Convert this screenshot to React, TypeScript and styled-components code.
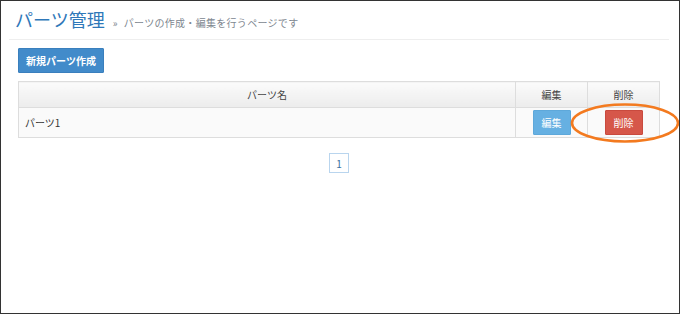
import styled, { createGlobalStyle } from 'styled-components';

const GlobalStyle = createGlobalStyle`
  html, body {
    margin: 0;
    padding: 0;
    background: #fff;
  }
  body {
    font-family: 'Noto Sans CJK JP', 'Noto Sans', sans-serif;
  }
`;

const parts = [{ id: 1, name: 'パーツ1' }];

export default function App() {
  return (
    <>
      <GlobalStyle />
      <Frame>
        <PageHeader>
          <Title>パーツ管理</Title>
          <SubTitle>
            <Chevron>»</Chevron>
            パーツの作成・編集を行うページです
          </SubTitle>
        </PageHeader>
        <Rule />
        <Content>
          <Toolbar>
            <Button variant="primary" wide>新規パーツ作成</Button>
          </Toolbar>
          <Table>
            <thead>
              <tr>
                <Th>パーツ名</Th>
                <Th width={71}>編集</Th>
                <Th width={71}>削除</Th>
              </tr>
            </thead>
            <tbody>
              {parts.map((p) => (
                <tr key={p.id}>
                  <Td>{p.name}</Td>
                  <Td center>
                    <Button variant="info">編集</Button>
                  </Td>
                  <Td center>
                    <Button variant="danger">削除</Button>
                  </Td>
                </tr>
              ))}
            </tbody>
          </Table>
          <Pagination>
            <PageItem>1</PageItem>
          </Pagination>
        </Content>
        <Highlight viewBox="0 0 112 44">
          <ellipse cx="56" cy="21" rx="53" ry="18.5" fill="none" stroke="#f37a1f" strokeWidth="2.6" />
        </Highlight>
      </Frame>
    </>
  );
}

const Frame = styled.div`
  position: relative;
  box-sizing: border-box;
  width: 680px;
  height: 314px;
  border: 1px solid #333;
  overflow: hidden;
`;

const PageHeader = styled.div`
  display: flex;
  align-items: baseline;
  gap: 8px;
  padding: 5px 0 0 14px;
  height: 34px;
  box-sizing: border-box;
`;

const Title = styled.h1`
  margin: 0;
  font-size: 18px;
  font-weight: 400;
  line-height: 26px;
  color: #2f78b9;
`;

const SubTitle = styled.span`
  font-size: 10px;
  letter-spacing: 0.3px;
  color: #808790;
`;

const Chevron = styled.span`
  margin-right: 6px;
`;

const Rule = styled.hr`
  margin: 4px 10px 0 8px;
  border: 0;
  border-top: 1px solid #eeeeee;
`;

const Content = styled.div`
  padding: 0 19px 0 17px;
`;

const Toolbar = styled.div`
  display: flex;
  padding-top: 8px;
  margin-bottom: 8px;
`;

const variants = {
  primary: { bg: '#428bca', border: '#3a7fbd' },
  info: { bg: '#66b0e2', border: '#5ea8da' },
  danger: { bg: '#d6574a', border: '#c94a3e' },
};

const Button = styled.button<{ variant: keyof typeof variants; wide?: boolean }>`
  box-sizing: border-box;
  height: 25px;
  width: ${(p) => (p.wide ? '86px' : '38px')};
  padding: 0;
  border: 1px solid ${(p) => variants[p.variant].border};
  background: ${(p) => variants[p.variant].bg};
  color: #fff;
  font-family: 'Noto Sans CJK JP', sans-serif;
  font-size: 10px;
  font-weight: ${(p) => (p.wide ? 700 : 400)};
  border-radius: 1px;
  cursor: pointer;
`;

const Table = styled.table`
  width: 642px;
  border-collapse: collapse;
  border: 1px solid #dddddd;
  font-size: 10px;
  color: #333;
`;

const Th = styled.th<{ width?: number }>`
  height: 25px;
  padding: 0;
  width: ${(p) => (p.width ? `${p.width}px` : 'auto')};
  border: 1px solid #dddddd;
  background: linear-gradient(#fbfbfb, #ececec);
  font-weight: 400;
  color: #444;
  text-align: center;
`;

const Td = styled.td<{ center?: boolean }>`
  height: 29px;
  padding: 0 0 0 6px;
  border: 1px solid #dddddd;
  background: #fafafa;
  text-align: ${(p) => (p.center ? 'center' : 'left')};
  vertical-align: middle;
  ${(p) => p.center && 'padding: 0;'}
`;

const Pagination = styled.div`
  display: flex;
  justify-content: center;
  margin-top: 15px;
`;

const PageItem = styled.span`
  box-sizing: border-box;
  width: 20px;
  height: 20px;
  display: flex;
  align-items: center;
  justify-content: center;
  border: 1px solid #b9d5ee;
  color: #3a6f9e;
  font-size: 10px;
`;

const Highlight = styled.svg`
  position: absolute;
  left: 568px;
  top: 101px;
  width: 112px;
  height: 44px;
`;
